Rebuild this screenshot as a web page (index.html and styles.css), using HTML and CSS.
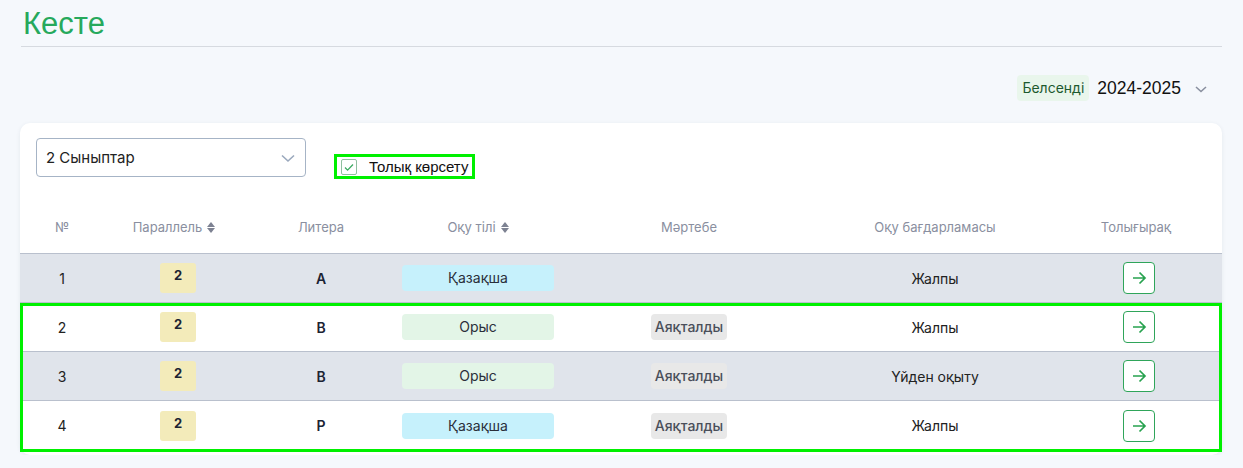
FILE: index.html
```html
<!DOCTYPE html>
<html lang="kk">
<head>
    <meta charset="UTF-8">
    <title>Кесте</title>
    <link rel="stylesheet" href="styles.css">
</head>
<body>
    <!-- Page title -->
    <header class="page-head">
        <h1>Кесте</h1>
    </header>

    <!-- Academic year -->
    <div class="year-bar">
        <span class="active-tag">Белсенді</span>
        <span class="year">2024-2025</span>
        <svg class="year-caret" width="14" height="14" viewBox="0 0 14 14"><path d="M2 5l5 4.5L12 5" fill="none" stroke="#8a90a0" stroke-width="1.6"/></svg>
    </div>

    <!-- Main card -->
    <main class="card">
        <div class="filters">
            <div class="select">
                <span>2 Сыныптар</span>
                <svg width="18" height="18" viewBox="0 0 18 18"><path d="M3 6.5l6 5.5 6-5.5" fill="none" stroke="#9aa8bd" stroke-width="1.6"/></svg>
            </div>
            <label class="show-all">
                <span class="check">
                    <svg width="12" height="12" viewBox="0 0 12 12"><path d="M2 6.5l2.6 2.6L10 3.5" fill="none" stroke="#3daa63" stroke-width="1.3"/></svg>
                </span>
                Толық көрсету
            </label>
        </div>

        <div class="table">
            <div class="row head">
                <div class="cell">№</div>
                <div class="cell">Параллель <span class="sort"></span></div>
                <div class="cell">Литера</div>
                <div class="cell">Оқу тілі <span class="sort"></span></div>
                <div class="cell">Мәртебе</div>
                <div class="cell">Оқу бағдарламасы</div>
                <div class="cell">Толығырақ</div>
            </div>
            <div class="row alt">
                <div class="cell">1</div>
                <div class="cell"><span class="grade">2</span></div>
                <div class="cell letter">А</div>
                <div class="cell"><span class="lang kz">Қазақша</span></div>
                <div class="cell"></div>
                <div class="cell">Жалпы</div>
                <div class="cell"><a class="go" href="#"><svg width="18" height="18" viewBox="0 0 18 18"><path d="M3 9h12M9.5 3.5L15 9l-5.5 5.5" fill="none" stroke="#27a24f" stroke-width="1.7"/></svg></a></div>
            </div>
            <div class="marked">
                <div class="row">
                    <div class="cell">2</div>
                    <div class="cell"><span class="grade">2</span></div>
                    <div class="cell letter">В</div>
                    <div class="cell"><span class="lang ru">Орыс</span></div>
                    <div class="cell"><span class="status">Аяқталды</span></div>
                    <div class="cell">Жалпы</div>
                    <div class="cell"><a class="go" href="#"><svg width="18" height="18" viewBox="0 0 18 18"><path d="M3 9h12M9.5 3.5L15 9l-5.5 5.5" fill="none" stroke="#27a24f" stroke-width="1.7"/></svg></a></div>
                </div>
                <div class="row alt">
                    <div class="cell">3</div>
                    <div class="cell"><span class="grade">2</span></div>
                    <div class="cell letter">В</div>
                    <div class="cell"><span class="lang ru">Орыс</span></div>
                    <div class="cell"><span class="status">Аяқталды</span></div>
                    <div class="cell">Үйден оқыту</div>
                    <div class="cell"><a class="go" href="#"><svg width="18" height="18" viewBox="0 0 18 18"><path d="M3 9h12M9.5 3.5L15 9l-5.5 5.5" fill="none" stroke="#27a24f" stroke-width="1.7"/></svg></a></div>
                </div>
                <div class="row last">
                    <div class="cell">4</div>
                    <div class="cell"><span class="grade">2</span></div>
                    <div class="cell letter">Р</div>
                    <div class="cell"><span class="lang kz">Қазақша</span></div>
                    <div class="cell"><span class="status">Аяқталды</span></div>
                    <div class="cell">Жалпы</div>
                    <div class="cell"><a class="go" href="#"><svg width="18" height="18" viewBox="0 0 18 18"><path d="M3 9h12M9.5 3.5L15 9l-5.5 5.5" fill="none" stroke="#27a24f" stroke-width="1.7"/></svg></a></div>
                </div>
            </div>
        </div>
    </main>
</body>
</html>
```

FILE: styles.css
```css
/* Global */
body {
    margin: 0;
    padding: 0 21px 0 20px;
    background-color: #f5f8fc;
    font-family: Inter, "Noto Sans", sans-serif;
    color: #222;
}

/* Title */
.page-head {
    border-bottom: 1px solid #d6dae0;
    padding: 6px 0 0 2px;
    height: 40px;
    margin-left: 1px;
}
.page-head h1 {
    margin: 0;
    font-family: "Liberation Sans", Arial, sans-serif;
    font-weight: 400;
    font-size: 31px;
    line-height: 36px;
    color: #26a95c;
}

/* Year selector */
.year-bar {
    display: flex;
    justify-content: flex-end;
    align-items: center;
    gap: 8px;
    margin-top: 28px;
    height: 26px;
    padding-right: 14px;
}
.active-tag {
    background: #e9f6ec;
    color: #1d5a2f;
    font-size: 14px;
    padding: 4px 5px;
    border-radius: 4px;
    line-height: 18px;
}
.year {
    font-family: "Liberation Sans", Arial, sans-serif;
    font-size: 17.5px;
    color: #111;
    margin-right: 5px;
}
.year-caret {
    margin-top: 2px;
}

/* Card */
.card {
    background: #fff;
    border-radius: 10px;
    box-shadow: 0 1px 4px rgba(40, 60, 90, 0.08);
    margin-top: 22px;
    padding-top: 15px;
    height: 332px;
    box-sizing: border-box;
}
.filters {
    display: flex;
    align-items: flex-start;
    padding-left: 16px;
}
.select {
    width: 270px;
    height: 39px;
    box-sizing: border-box;
    border: 1px solid #a6b4c6;
    border-radius: 4px;
    display: flex;
    align-items: center;
    justify-content: space-between;
    padding: 0 8px 0 9px;
    font-size: 15px;
    color: #222;
}
.show-all {
    display: flex;
    align-items: center;
    gap: 12px;
    margin: 16px 0 0 28px;
    height: 25px;
    padding: 0 4px 0 4px;
    border: 3px solid #00f000;
    font-family: "Liberation Sans", Arial, sans-serif;
    font-size: 15px;
    color: #111;
    box-sizing: border-box;
}
.check {
    width: 14px;
    height: 14px;
    border: 1px solid #8fbf9f;
    border-radius: 2px;
    display: flex;
    align-items: center;
    justify-content: center;
}

/* Table */
.table {
    margin-top: 22px;
    font-size: 14px;
}
.row {
    display: grid;
    grid-template-columns: 84px 140px 154px 160px 262px 230px 172px;
    height: 49px;
    border-bottom: 1px solid #b9c0cd;
    align-items: center;
    box-sizing: border-box;
}
.row.head {
    height: 53px;
    color: #8a8fa0;
    font-size: 13px;
}
.row.alt {
    background: #e0e4eb;
}
.row.last {
    border-bottom: none;
}
.cell {
    text-align: center;
    display: flex;
    justify-content: center;
    align-items: center;
    gap: 5px;
}
.sort {
    display: inline-block;
    width: 0;
    height: 0;
    border-left: 4px solid transparent;
    border-right: 4px solid transparent;
    border-bottom: 5px solid #7d8292;
    position: relative;
    top: -3px;
}
.sort::after {
    content: "";
    position: absolute;
    left: -4px;
    top: 6px;
    border-left: 4px solid transparent;
    border-right: 4px solid transparent;
    border-top: 5px solid #7d8292;
}
.letter {
    font-weight: 600;
    color: #1c2333;
}
.grade {
    display: inline-block;
    width: 36px;
    height: 30px;
    background: #f3ebba;
    border-radius: 3px;
    font-weight: 700;
    font-size: 13px;
    line-height: 24px;
    color: #1c2333;
    margin-left: 8px;
}
.lang {
    display: block;
    width: 152px;
    height: 26px;
    line-height: 26px;
    border-radius: 4px;
    color: #2a2f3a;
}
.lang.kz {
    background: #c6f1fc;
}
.lang.ru {
    background: #e3f5e7;
}
.status {
    background: #e8e8e8;
    color: #4a4f5a;
    font-weight: 500;
    border-radius: 4px;
    padding: 0 4px;
    height: 26px;
    line-height: 26px;
}
.go {
    width: 32px;
    height: 32px;
    box-sizing: border-box;
    border: 1px solid #2fa55a;
    border-radius: 4px;
    background: #fff;
    display: flex;
    align-items: center;
    justify-content: center;
    margin-left: 6px;
}
.marked {
    outline: 3px solid #00f000;
    outline-offset: -3px;
    height: 149px;
}
.marked .row {
    height: 49px;
}
```
